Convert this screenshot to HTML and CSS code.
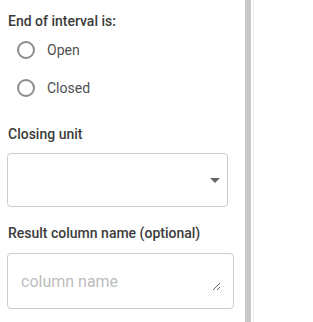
FILE: index.html
```html
<!DOCTYPE html>
<html lang="en">

<head>
    <meta charset="UTF-8">
    <meta name="viewport" content="width=device-width, initial-scale=1.0">
    <title>Interval options</title>
    <link rel="stylesheet" href="styles.css">
</head>

<body>
    <div class="layout">
        <div class="panel">
            <div class="label first">End of interval is:</div>
            <label class="radio-row">
                <span class="radio"></span>
                <span>Open</span>
            </label>
            <label class="radio-row">
                <span class="radio"></span>
                <span>Closed</span>
            </label>

            <div class="label unit">Closing unit</div>
            <div class="select">
                <span class="arrow"></span>
            </div>

            <div class="label result">Result column name (optional)</div>
            <div class="field">
                <textarea rows="1" placeholder="column name"></textarea>
            </div>
        </div>
        <div class="divider"></div>
        <div class="gap"></div>
        <div class="edge"></div>
        <div class="main"></div>
    </div>
</body>

</html>
```

FILE: styles.css
```css
body {
    margin: 0;
    background-color: #fff;
    font-family: Roboto, "Liberation Sans", sans-serif;
}

.layout {
    display: flex;
    height: 322px;
}

.panel {
    width: 245px;
    padding-left: 8px;
    box-sizing: border-box;
}

.label {
    font-size: 14px;
    font-weight: 500;
    line-height: 20px;
    color: #3b3b3b;
}

.label.first {
    margin-top: 11px;
}

.label.unit {
    margin-top: 17px;
}

.label.result {
    margin-top: 16px;
}

.radio-row {
    display: flex;
    align-items: center;
    height: 38px;
    font-size: 14px;
    color: #505050;
}

.radio {
    width: 18px;
    height: 18px;
    margin-left: 9px;
    margin-right: 12px;
    border: 2px solid #8c8c8c;
    border-radius: 50%;
    box-sizing: border-box;
}

.select {
    display: flex;
    align-items: center;
    justify-content: flex-end;
    width: 221px;
    height: 54px;
    margin-top: 9px;
    margin-left: -1px;
    padding-right: 7px;
    border: 1px solid #ccc;
    border-radius: 4px;
    box-sizing: border-box;
}

.arrow {
    width: 0;
    height: 0;
    border-left: 5px solid transparent;
    border-right: 5px solid transparent;
    border-top: 5px solid #666;
}

.field {
    width: 227px;
    height: 56px;
    margin-top: 10px;
    margin-left: -1px;
    padding: 18px 12px 0 13px;
    border: 1px solid #ccc;
    border-radius: 4px;
    box-sizing: border-box;
}

.field textarea {
    display: block;
    width: 100%;
    height: 19px;
    padding: 0;
    border: none;
    outline: none;
    font-family: Roboto, "Liberation Sans", sans-serif;
    font-size: 16px;
    line-height: 19px;
    color: #333;
    resize: vertical;
    overflow: hidden;
}

.field textarea::placeholder {
    color: #bdbdbd;
}

.divider {
    width: 6px;
    background-color: #c8c8c8;
}

.gap {
    width: 2px;
}

.edge {
    width: 1px;
    background-color: #eee;
}

.main {
    flex: 1;
}
```
